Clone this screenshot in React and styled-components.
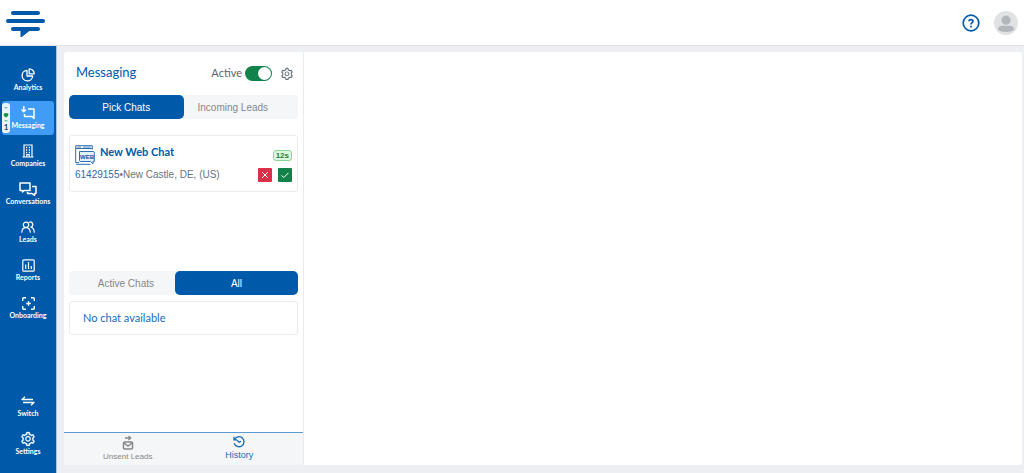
import React, { useState } from 'react'
import styled, { createGlobalStyle } from 'styled-components'
import { AiOutlineSetting } from 'react-icons/ai'

const LogoIcon = () => (
  <svg width="40" height="29" viewBox="0 0 40 29" fill="none" stroke="#0059a9" strokeWidth="4" strokeLinecap="round" aria-hidden="true">
    <path d="M7 3H32M2 11H37M7 19H32" />
    <path d="M15 20V27L24 20Z" fill="#0059a9" strokeWidth="1" />
  </svg>
)

const PieIcon = () => (
  <svg width="14" height="14" viewBox="0 0 14 14" fill="none" stroke="currentColor" strokeWidth="1.3" strokeLinejoin="round" aria-hidden="true">
    <path d="M6 2.3A5.3 5.3 0 1 0 11.7 8H6Z" />
    <path d="M8.2 0.8V5.8H13.2A5 5 0 0 0 8.2 0.8Z" />
  </svg>
)

const MessageIcon = () => (
  <svg width="14" height="14" viewBox="0 0 14 14" fill="none" stroke="currentColor" strokeWidth="1.5" aria-hidden="true">
    <path d="M7 3H13V12.5L11 10.5H3.5V8" strokeLinejoin="round" />
    <path d="M2.8 0V5.5M0.5 3.5L2.8 5.8L5 3.5" />
  </svg>
)

const CompanyIcon = () => (
  <svg width="12" height="14" viewBox="0 0 12 14" fill="none" stroke="currentColor" aria-hidden="true">
    <path d="M2 13V1H10V13M0.5 13H11.5M4.8 13V10.5H7.2V13" strokeWidth="1.2" />
    <path d="M4 3.5H5.2M6.8 3.5H8M4 6H5.2M6.8 6H8M4 8.5H5.2M6.8 8.5H8" strokeWidth="1.3" />
  </svg>
)

const ConversationIcon = () => (
  <svg width="18" height="14" viewBox="0 0 18 14" fill="none" stroke="currentColor" strokeWidth="1.5" strokeLinejoin="round" aria-hidden="true">
    <path d="M1 1H11V8.5H5L3.5 10V8.5H1Z" />
    <path d="M13 4.5H17V11.5H15.5V13.5L13 11.5H8.5V10" />
  </svg>
)

const LeadsIcon = () => (
  <svg width="14" height="12" viewBox="0 0 14 12" fill="none" stroke="currentColor" strokeWidth="1.2" strokeLinecap="round" aria-hidden="true">
    <circle cx="5" cy="3.8" r="2.7" />
    <path d="M0.8 11.2C1 8 3 6.6 5 6.6S9 8 9.3 11.2" />
    <path d="M8.3 1.2C10 0.5 11.8 1.6 11.8 3.5C11.8 5 10.6 6 9.5 6.2C11.7 6.5 13.1 8.2 13.3 11.2" />
  </svg>
)

const ReportIcon = () => (
  <svg width="13" height="13" viewBox="0 0 13 13" fill="none" stroke="currentColor" strokeWidth="1.2" aria-hidden="true">
    <rect x="0.8" y="0.8" width="11.4" height="11.4" rx="1" />
    <path d="M3.7 5.5V10M6.5 3V10M9.3 7V10" />
  </svg>
)

const OnboardIcon = () => (
  <svg width="13" height="13" viewBox="0 0 13 13" fill="none" stroke="currentColor" strokeWidth="1.4" aria-hidden="true">
    <path d="M0.7 4V1.7Q0.7 0.7 1.7 0.7H4M9 0.7H11.3Q12.3 0.7 12.3 1.7V4M12.3 9V11.3Q12.3 12.3 11.3 12.3H9M4 12.3H1.7Q0.7 12.3 0.7 11.3V9M6.5 4.2V8.8M4.2 6.5H8.8" />
  </svg>
)

const SwitchIcon = () => (
  <svg width="14" height="10" viewBox="0 0 14 10" fill="none" stroke="currentColor" strokeWidth="1.3" aria-hidden="true">
    <path d="M4 0.7L1 3.5H12M10 9.3L13 6.5H2" strokeLinejoin="round" />
  </svg>
)

const WebIcon = () => (
  <svg width="20" height="20" viewBox="0 0 20 20" fill="none" stroke="#2b6fb5" aria-hidden="true">
    <path d="M4 17.5H0.7V0.7H17.3V4.5M0.7 3.5H17.3" />
    <path d="M2.2 2.1H6M8 2.1H15.5" strokeWidth="0.8" />
    <path d="M4.5 6.5H18.3Q19.3 6.5 19.3 7.5V16.5H18V19L15.5 16.5H5.5Q4.5 16.5 4.5 15.5Z" fill="#e3effb" />
    <path d="M1 19.3H15.5" />
    <text x="12" y="14" fill="#0059a9" stroke="none" textAnchor="middle" fontSize="6" fontWeight="700" fontFamily="Liberation Sans, Arial, sans-serif">WEB</text>
  </svg>
)

const UnsentIcon = () => (
  <svg width="12" height="14" viewBox="0 0 12 14" fill="none" stroke="currentColor" strokeWidth="1.5" aria-hidden="true">
    <path d="M3 2H8M6.5 0L8.7 2L6.5 4" strokeWidth="1.3" />
    <rect x="1.5" y="6" width="9" height="7" rx="1" />
    <path d="M2 7L6 10L10 7" />
  </svg>
)

const HistoryIcon = () => (
  <svg width="12" height="12" viewBox="0 0 12 12" fill="none" stroke="currentColor" strokeWidth="1.3" aria-hidden="true">
    <path d="M1.5 3.5A5 5 0 1 1 1.2 7.2M1 0.8V3.8H4M4 4.3L6.2 6.3L8.2 5.2" />
  </svg>
)

const HelpIcon = () => (
  <svg width="18" height="18" viewBox="0 0 18 18" fill="none" stroke="#0059a9" strokeWidth="1.7" aria-hidden="true">
    <circle cx="9" cy="9" r="7.8" />
    <path d="M7 7.2C7 5 11 5 11 7.2C11 8.6 9 8.6 9 10.5M9 11.8V13.4" />
  </svg>
)

const AvatarIcon = () => (
  <svg width="24" height="24" viewBox="0 0 24 24" aria-hidden="true">
    <circle cx="12" cy="12" r="12" fill="#e1e2e4" />
    <circle cx="12" cy="9.2" r="4.6" fill="#b3b6ba" />
    <path d="M4 18.5C4 14.5 8 14.8 12 14.8S20 14.5 20 18.5C18 20.3 15 21 12 21S6 20.3 4 18.5Z" fill="#b3b6ba" />
  </svg>
)

const CrossIcon = () => (
  <svg width="8" height="8" viewBox="0 0 8 8" stroke="#fff" aria-hidden="true">
    <path d="M1 1L7 7M7 1L1 7" />
  </svg>
)

const CheckIcon = () => (
  <svg width="8" height="8" viewBox="0 0 8 8" fill="none" stroke="#fff" aria-hidden="true">
    <path d="M0.5 4.5L2.8 6.5L7.5 1.8" />
  </svg>
)

const CountIcon = () => (
  <svg width="6" height="18" viewBox="0 0 6 18" aria-hidden="true">
    <path d="M1 2H5L3 4ZM1 15H5L3 17Z" fill="#79c593" />
    <path d="M0.5 9Q3 7 5.5 9L5 11L3 12.5L1 11Z" fill="#129447" />
  </svg>
)

const mainLinks = [
  { label: 'Analytics', icon: <PieIcon /> },
  { label: 'Messaging', icon: <MessageIcon />, active: true },
  { label: 'Companies', icon: <CompanyIcon /> },
  { label: 'Conversations', icon: <ConversationIcon /> },
  { label: 'Leads', icon: <LeadsIcon /> },
  { label: 'Reports', icon: <ReportIcon /> },
  { label: 'Onboarding', icon: <OnboardIcon /> },
]

const bottomLinks = [
  { label: 'Switch', icon: <SwitchIcon /> },
  { label: 'Settings', icon: <AiOutlineSetting size={16} strokeWidth={20} /> },
]

const MenuItem = ({ item }) => (
  <SideLink href={'#' + item.label.toLowerCase()} $active={item.active}>
    {item.active && (
      <Badge>
        <CountIcon />
        1
      </Badge>
    )}
    <SideIcon>{item.icon}</SideIcon>
    {item.label}
  </SideLink>
)

const App = () => {
  const [online, setOnline] = useState(true)

  return (
    <Page>
      <GlobalStyle />
      <Header>
        <HomeLink href="#home" aria-label="Home"><LogoIcon /></HomeLink>
        <HeaderActions>
          <IconButton aria-label="Help"><HelpIcon /></IconButton>
          <IconButton aria-label="Profile"><AvatarIcon /></IconButton>
        </HeaderActions>
      </Header>
      <Body>
        <Sidebar>
          <LinkGroup>
            {mainLinks.map((item) => <MenuItem item={item} key={item.label} />)}
          </LinkGroup>
          <LinkGroup>
            {bottomLinks.map((item) => <MenuItem item={item} key={item.label} />)}
          </LinkGroup>
        </Sidebar>
        <Main>
          <Panel>
            <PanelHeader>
              <Title>Messaging</Title>
              <SwitchLabel>
                <span>Active</span>
                <Toggle type="checkbox" role="switch" checked={online} onChange={(e) => setOnline(e.target.checked)} />
              </SwitchLabel>
              <IconButton aria-label="Messaging settings"><AiOutlineSetting size={14} /></IconButton>
            </PanelHeader>
            <PickSection>
              <Tabs $columns="1fr 1fr">
                <Tab $active>Pick Chats</Tab>
                <Tab $align="left">Incoming Leads</Tab>
              </Tabs>
              <ChatCard>
                <ChatTop>
                  <WebIcon />
                  <ChatName>New Web Chat</ChatName>
                  <Timer>12s</Timer>
                </ChatTop>
                <ChatBottom>
                  <ChatInfo><ChatId>61429155</ChatId>•New Castle, DE, (US)</ChatInfo>
                  <ActionButton $color="#dc3048" aria-label="Reject chat"><CrossIcon /></ActionButton>
                  <ActionButton $color="#12824a" aria-label="Accept chat"><CheckIcon /></ActionButton>
                </ChatBottom>
              </ChatCard>
            </PickSection>
            <ActiveSection>
              <Tabs $columns="106fr 123fr">
                <Tab $align="right">Active Chats</Tab>
                <Tab $active>All</Tab>
              </Tabs>
              <EmptyCard>No chat available</EmptyCard>
            </ActiveSection>
            <PanelFooter>
              <FooterButton><UnsentIcon />Unsent Leads</FooterButton>
              <FooterButton $active><HistoryIcon />History</FooterButton>
            </PanelFooter>
          </Panel>
          <Content />
        </Main>
      </Body>
    </Page>
  )
}

export default App

const GlobalStyle = createGlobalStyle`
  * {
    box-sizing: border-box;
  }
  body {
    margin: 0;
    font-family: Lato, sans-serif;
    color: #0059a9;
  }
  button {
    border: 0;
    padding: 0;
    background: none;
    color: inherit;
    font-family: "Liberation Sans", Arial, sans-serif;
    cursor: pointer;
  }
  svg {
    display: block;
    flex-shrink: 0;
  }
`
const Page = styled.div`
  display: flex;
  flex-direction: column;
  min-height: 100vh;
  background: #edeff3;
`
const Header = styled.header`
  display: flex;
  align-items: center;
  justify-content: space-between;
  height: 46px;
  padding: 0 6px;
  background: #fff;
  border-bottom: 1px solid #dfe1e5;
`
const HomeLink = styled.a`
  padding-top: 4px;
`
const HeaderActions = styled.div`
  display: flex;
  align-items: center;
  gap: 14px;
`
const IconButton = styled.button`
  display: flex;
  color: #59636e;
`
const Body = styled.div`
  display: flex;
  flex: 1;
`
const Sidebar = styled.nav`
  display: flex;
  flex-direction: column;
  justify-content: space-between;
  width: 57px;
  padding: 17px 2px 12px;
  background: #0059a9;
  border-right: 1px solid #a9c8e5;
`
const LinkGroup = styled.div`
  display: flex;
  flex-direction: column;
  gap: 4px;
`
const SideLink = styled.a`
  position: relative;
  display: flex;
  flex-direction: column;
  align-items: center;
  height: 34px;
  padding-top: 4px;
  border-radius: 3px;
  background: ${({ $active }) => ($active ? '#409cf5' : 'transparent')};
  color: white;
  font-size: 7px;
  font-weight: 700;
  line-height: 9px;
  text-decoration: none;
`
const SideIcon = styled.span`
  display: flex;
  align-items: center;
  height: 16px;
`
const Badge = styled.span`
  position: absolute;
  left: 0;
  top: 2px;
  display: flex;
  flex-direction: column;
  align-items: center;
  width: 8px;
  height: 30px;
  padding-top: 2px;
  border-radius: 3px;
  background: #eef1f5;
  color: #174474;
  font-size: 8px;
  line-height: 9px;
`
const Main = styled.main`
  display: flex;
  flex: 1;
  padding: 6px 2px 8px 7px;
`
const Panel = styled.section`
  display: flex;
  flex-direction: column;
  width: 240px;
  background: #fff;
  border-right: 1px solid #e9ecef;
  border-radius: 3px 0 0 0;
`
const Content = styled.section`
  flex: 1;
  background: #fff;
  border-radius: 0 3px 3px 0;
`
const PanelHeader = styled.div`
  display: flex;
  align-items: center;
  height: 43px;
  padding: 0 9px 0 12px;
`
const Title = styled.h1`
  flex: 1;
  margin: 0;
  padding-bottom: 4px;
  font-size: 13px;
  font-weight: 400;
  line-height: 18px;
`
const SwitchLabel = styled.label`
  display: flex;
  align-items: center;
  gap: 3px;
  margin-right: 8px;
  color: #59636e;
  font-size: 11px;
  line-height: 16px;

  span {
    padding-bottom: 2px;
  }
`
const Toggle = styled.input`
  appearance: none;
  display: flex;
  align-items: center;
  width: 27px;
  height: 15px;
  margin: 0;
  padding: 1px;
  border-radius: 8px;
  background: ${({ checked }) => (checked ? '#12824a' : '#adb5bd')};

  &::before {
    content: '';
    width: 13px;
    height: 13px;
    margin-left: ${({ checked }) => (checked ? 'auto' : '0')};
    border-radius: 50%;
    background: white;
  }
`
const PickSection = styled.div`
  height: 176px;
  padding: 0 5px;
`
const ActiveSection = styled.div`
  flex: 1;
  padding: 0 5px;
`
const Tabs = styled.div`
  display: grid;
  grid-template-columns: ${({ $columns }) => $columns};
  height: 24px;
  border-radius: 4px;
  background: #f5f6f8;
`
const Tab = styled.button`
  padding: 0 ${({ $align }) => ($align === 'right' ? '21px' : '14px')};
  border-radius: 5px;
  background: ${({ $active }) => ($active ? '#0059a9' : 'transparent')};
  color: ${({ $active }) => ($active ? 'white' : '#858789')};
  font-size: 10px;
  text-align: ${({ $align }) => $align || 'center'};
`
const ChatCard = styled.article`
  margin-top: 16px;
  height: 57px;
  padding: 9px 5px 0;
  border: 1px solid #e9ecef;
  border-radius: 3px;
`
const ChatTop = styled.div`
  display: flex;
  align-items: center;
  gap: 5px;
  height: 20px;
`
const ChatName = styled.h2`
  flex: 1;
  margin: 0;
  padding-bottom: 6px;
  font-size: 11px;
  font-weight: 700;
  line-height: 14px;
`
const Timer = styled.span`
  padding: 0 2px;
  border: 1px solid #8ad58f;
  border-radius: 3px;
  background: #dcf7dc;
  color: #327a3a;
  font: 700 8px/9px "Liberation Sans", Arial, sans-serif;
`
const ChatBottom = styled.div`
  display: flex;
  align-items: center;
  gap: 6px;
  margin-top: 3px;
`
const ChatInfo = styled.p`
  flex: 1;
  margin: 0;
  color: #68747e;
  font: 10px/14px "Liberation Sans", Arial, sans-serif;
`
const ChatId = styled.span`
  color: #3569a5;
`
const ActionButton = styled.button`
  display: flex;
  align-items: center;
  justify-content: center;
  width: 14px;
  height: 14px;
  border-radius: 1px;
  background: ${({ $color }) => $color};
`
const EmptyCard = styled.div`
  margin-top: 6px;
  padding: 8px 13px;
  border: 1px solid #e9ecef;
  border-radius: 3px;
  color: #176cb7;
  font-size: 11px;
  line-height: 16px;
`
const PanelFooter = styled.footer`
  display: grid;
  grid-template-columns: 1fr 1fr;
  height: 33px;
  padding: 0 8px;
  border-top: 1px solid #5b9bd0;
  background: #f5f6f8;
`
const FooterButton = styled.button`
  display: flex;
  flex-direction: column;
  align-items: center;
  gap: 1px;
  padding-top: 3px;
  color: ${({ $active }) => ($active ? '#176cb7' : '#858789')};
  font-size: ${({ $active }) => ($active ? '9px' : '8px')};
  line-height: 12px;
`
